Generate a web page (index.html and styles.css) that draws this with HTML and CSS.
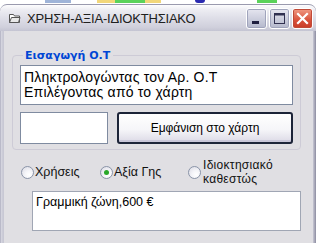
FILE: index.html
```html
<!DOCTYPE html>
<html lang="el">
<head>
<meta charset="utf-8">
<link rel="stylesheet" href="styles.css">
</head>
<body>
<div class="desk">
  <span class="d d1"></span><span class="d d2"></span><span class="d d3"></span><span class="d d4"></span><span class="d d5"></span><span class="d d6"></span>
</div>
<div class="window">
  <div class="titlebar">
    <svg class="ticon" width="13" height="12" viewBox="0 0 13 12">
      <path d="M1.5 2.5h4l1 1.5h5v6.5h-10z" fill="#fff" stroke="#555" stroke-width="1"/>
      <path d="M3.5 5.5h8.5l-1.5 5h-9z" fill="#e8e8e8" stroke="#555" stroke-width="1"/>
    </svg>
    <span class="ttext">ΧΡΗΣΗ-ΑΞΙΑ-ΙΔΙΟΚΤΗΣΙΑΚΟ</span>
    <div class="tbtns">
      <span class="tb"><svg width="19" height="19" viewBox="0 0 19 19"><rect x="5" y="12" width="7" height="3" fill="#202040"/></svg></span>
      <span class="tb"><svg width="19" height="19" viewBox="0 0 19 19"><rect x="4.5" y="4.5" width="10" height="10" fill="none" stroke="#303050" stroke-width="1"/><rect x="4.5" y="4.5" width="10" height="2" fill="#303050"/></svg></span>
      <span class="tb close"><svg width="19" height="19" viewBox="0 0 19 19"><path d="M5 5l9 9M14 5l-9 9" stroke="#fff" stroke-width="2.2" stroke-linecap="square"/></svg></span>
    </div>
  </div>
  <div class="client">
    <div class="group">
      <div class="legend">Εισαγωγή Ο.Τ</div>
      <div class="listbox">
        <div>Πληκτρολογώντας τον Αρ. Ο.Τ</div>
        <div>Επιλέγοντας από το χάρτη</div>
      </div>
      <div class="row">
        <div class="tbox"></div>
        <div class="btn">Εμφάνιση στο χάρτη</div>
      </div>
    </div>
    <div class="radios">
      <div class="radio r1"><span class="dot"></span><span>Χρήσεις</span></div>
      <div class="radio r2"><span class="dot on"></span><span>Αξία Γης</span></div>
      <div class="radio r3"><span class="dot"></span><span class="two">Ιδιοκτησιακό<br>καθεστώς</span></div>
    </div>
    <div class="result">Γραμμική ζώνη,600 €</div>
  </div>
</div>
</body>
</html>
```
FILE: styles.css
```css
html, body {
  margin: 0;
  padding: 0;
  width: 316px;
  height: 243px;
  overflow: hidden;
  background: #ffffff;
  font-family: "Liberation Sans", Arial, sans-serif;
}
.desk {
  height: 4px;
  display: flex;
  align-items: flex-start;
}
.d { height: 3px; display: block; }
.d1 { margin-left: 45px; width: 26px; background: #9fb4d8; }
.d2 { margin-left: 26px; width: 18px; background: #f2d77a; }
.d3 { width: 30px; background: #5ad25a; }
.d4 { width: 16px; background: #f2d77a; }
.d5 { margin-left: 34px; width: 10px; background: #2a2ab0; border-radius: 0 0 5px 5px; }
.d6 { margin-left: 52px; width: 20px; background: #5ad25a; }

.window {
  height: 239px;
  border-radius: 7px 7px 0 0;
  background: linear-gradient(to right, #9c9cb0 0, #d8d8e2 1px, #c8c8d4 3px, #c8c8d4 calc(100% - 3px), #8c8ca0 100%);
  display: flex;
  flex-direction: column;
  overflow: hidden;
}
.titlebar {
  height: 26px;
  flex: none;
  display: flex;
  align-items: center;
  padding: 0 3px 0 8px;
  border-radius: 7px 7px 0 0;
  border-top: 1px solid #9a9aae;
  background: linear-gradient(to bottom, #fdfdfe 0%, #ececf2 20%, #dcdce6 55%, #d0d0dc 85%, #c4c4d2 100%);
}
.ticon { flex: none; margin-right: 6px; }
.ttext {
  flex: 1;
  font-size: 13px;
  color: #202020;
  padding-top: 1px;
  letter-spacing: -0.2px;
}
.tbtns { display: flex; gap: 2px; align-self: flex-start; margin-top: 3px; }
.tb {
  width: 19px;
  height: 19px;
  border: 1px solid #ffffff;
  border-radius: 3px;
  background: linear-gradient(to bottom, #e6e6f0, #b4b8cc);
  box-shadow: inset 0 0 0 1px #a0a4bc;
  display: block;
}
.tb svg { display: block; margin: 0; }
.close {
  background: linear-gradient(to bottom, #f09a84, #d8503a 60%, #c83c28);
  box-shadow: inset 0 0 0 1px #c04a38;
}

.client {
  flex: 1;
  margin: 0 3px 0 4px;
  background: #e0dfe3;
  padding: 24px 12px 0 8px;
}
.group {
  padding: 0 7px 5px 7px;
  border: 1px solid #cdcbd6;
  border-radius: 4px;
}
.legend {
  display: table;
  margin: -7px 0 3px 3px;
  padding: 0 3px 0 2px;
  background: #e0dfe3;
  color: #0046d5;
  font-family: "DejaVu Sans", sans-serif;
  font-weight: bold;
  font-size: 11px;
  line-height: 13px;
}
.listbox {
  background: #ffffff;
  border: 1px solid #7f8ba0;
  padding: 4px 0 0 3px;
  box-sizing: border-box;
  height: 40px;
  font-size: 14px;
  line-height: 15px;
  color: #000;
  letter-spacing: 0.2px;
}
.listbox div { line-height: 15px; height: 15px; }
.row {
  display: flex;
  gap: 9px;
  margin-top: 7px;
}
.tbox {
  width: 88px;
  height: 32px;
  box-sizing: border-box;
  background: #fff;
  border: 1px solid #7f8ba0;
}
.btn {
  flex: 1;
  height: 32px;
  box-sizing: border-box;
  border: 2px solid #1c2438;
  border-radius: 3px;
  background: linear-gradient(to bottom, #ffffff 0%, #f6f6f9 55%, #dcdae6 100%);
  box-shadow: inset 0 -2px 0 #c8c6d8;
  display: flex;
  align-items: center;
  justify-content: center;
  font-size: 12px;
  color: #000;
}
.radios {
  display: flex;
  align-items: center;
  height: 30px;
  margin-top: 7px;
  font-size: 12.5px;
  color: #111;
}
.radio { display: flex; align-items: center; }
.r1 { margin-left: 9px; width: 79px; }
.r2 { width: 88px; }
.dot {
  width: 11px;
  height: 11px;
  border: 1px solid #8a94a8;
  border-radius: 50%;
  background: radial-gradient(circle at 65% 70%, #ffffff 0, #f4f4f8 40%, #d8d8e2 100%);
  margin-right: 1px;
  position: relative;
  flex: none;
}
.dot.on::after {
  content: "";
  position: absolute;
  left: 3px;
  top: 3px;
  width: 5px;
  height: 5px;
  border-radius: 50%;
  background: #2aa82a;
}
.r3 .dot { margin-right: 2px; }
.two { font-size: 12px; line-height: 14px; letter-spacing: 0.3px; }
.result {
  margin: 4px 0 0 20px;
  height: 40px;
  box-sizing: border-box;
  background: #fff;
  border: 1px solid #a0a6b4;
  padding: 3px 0 0 3px;
  font-size: 12.5px;
  color: #000;
}
```
